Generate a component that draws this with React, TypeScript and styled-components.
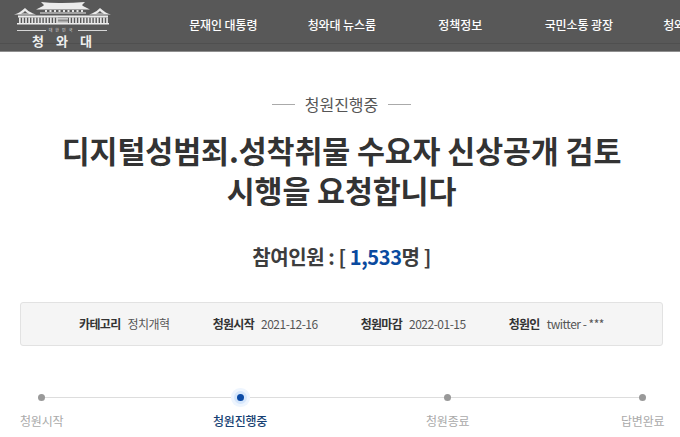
import styled, { createGlobalStyle } from "styled-components";

const Global = createGlobalStyle`
  html, body {
    margin: 0;
    padding: 0;
    background: #fff;
    overflow: hidden;
    font-family: "Noto Sans CJK KR", "Noto Sans", sans-serif;
  }
`;

const Page = styled.div`
  width: 680px;
  height: 437px;
  overflow: hidden;
`;

const Header = styled.header`
  width: 683px;
  height: 51px;
  display: flex;
  background: linear-gradient(#585858 43px, #4f4f4f 43px, #4f4f4f 44px, #585858 44px);
  border-bottom: 1px solid #8f8f8f;
  overflow: hidden;
`;

const Logo = styled.div`
  width: 164px;
  flex: none;
  padding: 1px 0 0 14px;
  box-sizing: border-box;
  color: #eee;
`;

const LogoSub = styled.div`
  width: 90px;
  margin: 3px 0 0 3px;
  display: flex;
  align-items: center;
  gap: 3px;
  font-size: 4px;
  line-height: 5px;
  letter-spacing: 3px;
  color: #ddd;
  white-space: nowrap;
  &::before,
  &::after {
    content: "";
    flex: 1;
    height: 1px;
    background: #d6d6d6;
  }
`;

const LogoName = styled.div`
  width: 96px;
  margin-left: 6px;
  text-align: center;
  font-size: 13px;
  line-height: 16px;
  font-weight: 700;
  letter-spacing: 12px;
  white-space: nowrap;
`;

const Nav = styled.nav`
  display: flex;
  flex: none;
`;

const NavItem = styled.a`
  width: 118.5px;
  flex: none;
  text-align: center;
  color: #fff;
  font-size: 12px;
  font-weight: 500;
  line-height: 50px;
  letter-spacing: -0.1px;
  white-space: nowrap;
`;

const Main = styled.main`
  width: 683px;
  box-sizing: border-box;
  padding: 0 20px;
  display: flex;
  flex-direction: column;
  align-items: center;
`;

const Status = styled.div`
  margin-top: 41px;
  display: flex;
  align-items: center;
  gap: 10px;
  font-size: 16px;
  line-height: 22px;
  color: #555;
  &::before,
  &::after {
    content: "";
    width: 23px;
    height: 1px;
    background: #aaa;
  }
`;

const Title = styled.h1`
  margin: 15px 0 0;
  width: 570px;
  text-align: center;
  font-size: 30.4px;
  line-height: 40px;
  font-weight: 700;
  letter-spacing: -0.1px;
  color: #333;
`;

const Count = styled.h2`
  margin: 32px 0 0;
  font-size: 20px;
  line-height: 30px;
  font-weight: 700;
  letter-spacing: -0.4px;
  color: #3d3d3d;
  white-space: pre;
`;

const Num = styled.span`
  color: #0a4a9f;
`;

const Info = styled.div`
  margin-top: 30px;
  width: 100%;
  height: 44px;
  box-sizing: border-box;
  display: flex;
  justify-content: center;
  align-items: center;
  gap: 43px;
  background: #f5f5f5;
  border: 1px solid #e2e2e2;
  border-radius: 3px;
`;

const InfoItem = styled.div`
  display: flex;
  align-items: center;
  gap: 7px;
  font-size: 12px;
  line-height: 18px;
  color: #555;
  white-space: nowrap;
  letter-spacing: -0.5px;
`;

const InfoLabel = styled.b`
  font-weight: 700;
  color: #333;
  letter-spacing: -0.7px;
`;

const Steps = styled.ol`
  list-style: none;
  align-self: stretch;
  margin: 34px 0 0;
  padding: 0;
  display: grid;
  grid-template-columns: 193px 213px 195px auto;
  justify-items: start;
  position: relative;
  &::before {
    content: "";
    position: absolute;
    left: 21px;
    right: 21px;
    top: 17px;
    height: 1px;
    background: #ddd;
  }
`;

const Step = styled.li<{ $active?: boolean }>`
  display: flex;
  flex-direction: column;
  align-items: center;
  gap: 11px;
  font-size: 12px;
  line-height: 18px;
  letter-spacing: -0.2px;
  white-space: nowrap;
  font-weight: ${(p) => (p.$active ? 500 : 400)};
  color: ${(p) => (p.$active ? "#173f73" : "#aaa")};
  position: relative;
`;

const Dot = styled.span<{ $active?: boolean }>`
  width: 7px;
  height: 7px;
  margin-top: 14px;
  border-radius: 50%;
  background: ${(p) => (p.$active ? "#0a4aa6" : "#999")};
  box-shadow: ${(p) =>
    p.$active ? "0 0 0 3px #d5e6fb, 0 0 0 6px #eef5fe" : "none"};
`;

const menu = ["문재인 대통령", "청와대 뉴스룸", "정책정보", "국민소통 광장", "청와대 사랑채"];
const info = [
  ["카테고리", "정치개혁"],
  ["청원시작", "2021-12-16"],
  ["청원마감", "2022-01-15"],
  ["청원인", "twitter - ***"],
];
const steps = ["청원시작", "청원진행중", "청원종료", "답변완료"];

const LogoMark = () => (
  <svg width="98" height="24" viewBox="0 0 98 24" style={{ display: "block" }}>
    <g fill="#ececec">
      {/* main roof */}
      <path d="M27 1q10 1.2 21 1t23-1l-3 3 1 1 7 3.5H22L29 5l1-1z" />
      {/* side gables */}
      <path d="M0 13.5q5-1 11-6.5 3 3.5 8 5.5l3 1z" />
      <path d="M97 13.5q-5-1-11-6.5-3 3.5-8 5.5l-3 1z" />
      {/* walls */}
      <rect x="4" y="14.5" width="90" height="2" />
      <rect x="3" y="22" width="92" height="1.5" />
      <rect x="26" y="11.5" width="46" height="1" />
    </g>
    <path d="M7 12.5q3-1 4-2.5 2 2 4 2.5zM90 12.5q-3-1-4-2.5-2 2-4 2.5z" fill="#585858" />
    <g fill="#e4e4e4">
      {Array.from({ length: 13 }, (_, i) => (
        <rect key={`l${i}`} x={5 + i * 3.1} y="16.5" width="1.7" height="5.5" />
      ))}
      {Array.from({ length: 13 }, (_, i) => (
        <rect key={`r${i}`} x={55 + i * 3.1} y="16.5" width="1.7" height="5.5" />
      ))}
      {Array.from({ length: 4 }, (_, i) => (
        <rect key={`s${i}`} x="44" y={17 + i * 1.4} width="10" height="0.8" />
      ))}
      {Array.from({ length: 9 }, (_, i) => (
        <rect key={`u${i}`} x={31 + i * 4.5} y="9" width="2" height="2" />
      ))}
    </g>
  </svg>
);

export default function App() {
  return (
    <Page>
      <Global />
      <Header>
        <Logo>
          <LogoMark />
          <LogoSub>대한민국</LogoSub>
          <LogoName>청와대</LogoName>
        </Logo>
        <Nav>
          {menu.map((m) => (
            <NavItem key={m}>{m}</NavItem>
          ))}
        </Nav>
      </Header>
      <Main>
        <Status>청원진행중</Status>
        <Title>디지털성범죄.성착취물 수요자 신상공개 검토 시행을 요청합니다</Title>
        <Count>
          참여인원 : [ <Num>1,533</Num>명 ]
        </Count>
        <Info>
          {info.map(([k, v]) => (
            <InfoItem key={k}>
              <InfoLabel>{k}</InfoLabel>
              {v}
            </InfoItem>
          ))}
        </Info>
        <Steps>
          {steps.map((s, i) => (
            <Step key={s} $active={i === 1}>
              <Dot $active={i === 1} />
              {s}
            </Step>
          ))}
        </Steps>
      </Main>
    </Page>
  );
}
